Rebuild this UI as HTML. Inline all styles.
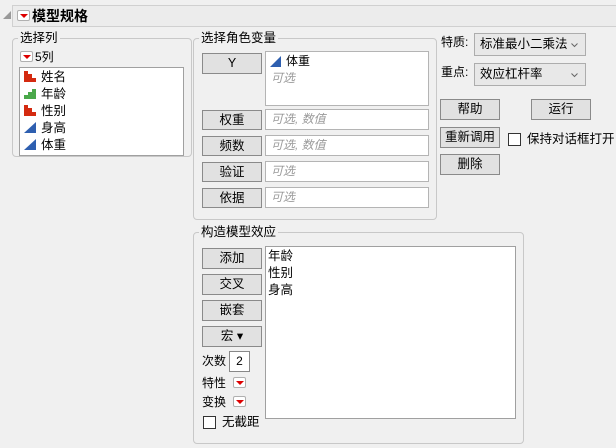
<!DOCTYPE html>
<html><head><meta charset="utf-8"><style>
*{box-sizing:border-box;margin:0;padding:0}
body{width:616px;height:448px;background:#f0f0f0;font-family:"Liberation Sans","Noto Sans CJK SC",sans-serif;font-size:12px;color:#000;position:relative;overflow:hidden}
.a{position:absolute}
.grp{position:absolute;border:1px solid #c8c8c8;border-radius:4px}
.lg{position:absolute;background:#f0f0f0;padding:0 2px;font-size:12.5px;line-height:14px;top:-8px;left:5px}
.btn{position:absolute;background:#e1e1e1;border:1px solid #8a8a8a;text-align:center;line-height:18px;font-size:12.5px}
.box{position:absolute;background:#fff;border:1px solid #b4b4b4}
.ph{color:#9a9a9a;font-style:italic;padding-left:5px;line-height:18px}
.rt{position:absolute;width:13px;height:11px;background:#fff;border:1px solid #b0b0b0;border-radius:2px}
.rt:after{content:"";position:absolute;left:2px;top:3px;border-left:4px solid transparent;border-right:4px solid transparent;border-top:4px solid #d00}
.cb{position:absolute;width:13px;height:13px;background:#fff;border:1px solid #333}
.dd{position:absolute;background:#e8e8e8;border:1px solid #adadad;line-height:20px;padding-left:5px;font-size:12.5px}
.dd svg{position:absolute;right:7px;top:9px}
</style></head><body>
<div class="a" style="left:3px;top:11px;width:0;height:0;border-left:8px solid transparent;border-bottom:8px solid #999"></div>
<div class="a" style="left:12px;top:5px;width:604px;height:22px;background:#ececec;border:1px solid #d0d0d0;border-right:none"></div>
<div class="rt" style="left:17px;top:10px"></div>
<div class="a" style="left:32px;top:7px;font-size:14px;font-weight:bold;line-height:18px">模型规格</div>

<div class="grp" style="left:12px;top:38px;width:180px;height:119px"><div class="lg">选择列</div></div>
<div class="rt" style="left:20px;top:51px"></div>
<div class="a" style="left:35px;top:50px;line-height:14px">5列</div>
<div class="box" style="left:19px;top:67px;width:165px;height:89px;border-color:#a0a0a0"></div>
<svg class="a" style="left:24px;top:70px" width="16" height="85">
<g fill="#d42a10"><rect x="0" y="1" width="4" height="11"/><rect x="4" y="4" width="4" height="8"/><rect x="8" y="8" width="4" height="4"/></g>
<g fill="#4aa84a" transform="translate(0,17)"><rect x="0" y="8" width="4" height="4"/><rect x="4" y="5" width="4" height="7"/><rect x="8" y="2" width="4" height="10"/></g>
<g fill="#d42a10" transform="translate(0,34)"><rect x="0" y="1" width="4" height="11"/><rect x="4" y="4" width="4" height="8"/><rect x="8" y="8" width="4" height="4"/></g>
<polygon points="0,63 12,52 12,63" fill="#2e5fb0"/><polygon points="0,80 12,69 12,80" fill="#2e5fb0"/>
</svg>
<div class="a" style="left:41px;top:69px;line-height:17px;font-size:12.5px">姓名<br>年龄<br>性别<br>身高<br>体重</div>

<div class="grp" style="left:193px;top:38px;width:244px;height:182px"><div class="lg">选择角色变量</div></div>
<div class="btn" style="left:202px;top:53px;width:60px;height:21px">Y</div>
<div class="btn" style="left:202px;top:110px;width:60px;height:20px">权重</div>
<div class="btn" style="left:202px;top:136px;width:60px;height:20px">频数</div>
<div class="btn" style="left:202px;top:162px;width:60px;height:20px">验证</div>
<div class="btn" style="left:202px;top:188px;width:60px;height:20px">依据</div>
<div class="box" style="left:265px;top:51px;width:164px;height:55px">
<svg class="a" style="left:4px;top:4px" width="12" height="12"><polygon points="0,11 11,0 11,11" fill="#2e5fb0"/></svg>
<div class="a" style="left:20px;top:1px;line-height:17px">体重</div>
<div class="a ph" style="left:0;top:17px">可选</div></div>
<div class="box" style="left:265px;top:109px;width:164px;height:21px"><div class="ph">可选, 数值</div></div>
<div class="box" style="left:265px;top:135px;width:164px;height:21px"><div class="ph">可选, 数值</div></div>
<div class="box" style="left:265px;top:161px;width:164px;height:21px"><div class="ph">可选</div></div>
<div class="box" style="left:265px;top:187px;width:164px;height:21px"><div class="ph">可选</div></div>

<div class="a" style="left:441px;top:35px;line-height:14px">特质:</div>
<div class="dd" style="left:474px;top:33px;width:112px;height:23px">标准最小二乘法<svg width="7" height="5"><path d="M0.5 0.5L3.5 3.5L6.5 0.5" stroke="#666" fill="none"/></svg></div>
<div class="a" style="left:441px;top:65px;line-height:14px">重点:</div>
<div class="dd" style="left:474px;top:63px;width:112px;height:23px">效应杠杆率<svg width="7" height="5"><path d="M0.5 0.5L3.5 3.5L6.5 0.5" stroke="#666" fill="none"/></svg></div>
<div class="btn" style="left:440px;top:99px;width:60px;height:21px">帮助</div>
<div class="btn" style="left:531px;top:99px;width:60px;height:21px">运行</div>
<div class="btn" style="left:440px;top:127px;width:60px;height:21px">重新调用</div>
<div class="cb" style="left:508px;top:133px"></div>
<div class="a" style="left:527px;top:131px;line-height:16px;font-size:12.5px">保持对话框打开</div>
<div class="btn" style="left:440px;top:154px;width:60px;height:21px">删除</div>

<div class="grp" style="left:193px;top:232px;width:331px;height:212px"><div class="lg">构造模型效应</div></div>
<div class="btn" style="left:202px;top:248px;width:60px;height:21px">添加</div>
<div class="btn" style="left:202px;top:274px;width:60px;height:21px">交叉</div>
<div class="btn" style="left:202px;top:300px;width:60px;height:21px">嵌套</div>
<div class="btn" style="left:202px;top:326px;width:60px;height:21px">宏 ▾</div>
<div class="a" style="left:202px;top:354px;line-height:14px">次数</div>
<div class="box" style="left:229px;top:351px;width:21px;height:21px;text-align:center;line-height:19px;border-color:#888">2</div>
<div class="a" style="left:202px;top:376px;line-height:14px">特性</div>
<div class="rt" style="left:233px;top:377px"></div>
<div class="a" style="left:202px;top:395px;line-height:14px">变换</div>
<div class="rt" style="left:233px;top:396px"></div>
<div class="cb" style="left:203px;top:416px"></div>
<div class="a" style="left:222px;top:414px;line-height:16px;font-size:12.5px">无截距</div>
<div class="box" style="left:265px;top:246px;width:251px;height:173px;border-color:#a0a0a0">
<div class="a" style="left:2px;top:1px;line-height:17px;font-size:12.5px">年龄<br>性别<br>身高</div></div>
</body></html>
